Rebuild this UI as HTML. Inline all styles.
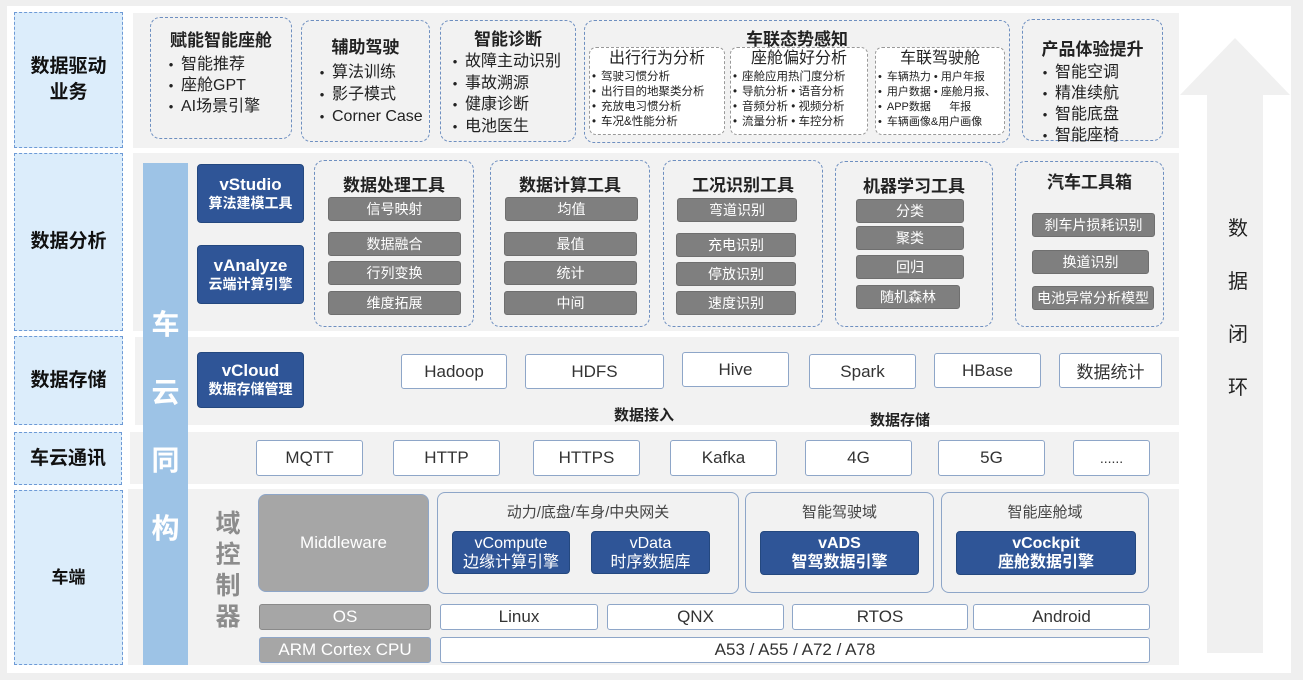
<!DOCTYPE html><html><head><meta charset="utf-8"><style>
*{margin:0;padding:0;box-sizing:border-box}
body{width:1303px;height:680px;background:#efefef;position:relative;overflow:hidden;font-family:"Liberation Sans","Noto Sans CJK SC",sans-serif;color:#222}
.a{position:absolute}
.panel{left:7px;top:6px;width:1284px;height:667px;background:#fff}
.lab{border:1.5px dashed #6d9ad6;background:#dcedfb;display:flex;align-items:center;justify-content:center;font-weight:700;font-size:19px;text-align:center;line-height:26px;color:#111}
.band{background:#f2f2f2}
.db{border:1.2px dashed #6e8fc0;border-radius:10px}
.t{font-weight:700;font-size:17px;text-align:center}
ul.l{list-style:none;font-size:16px;line-height:21px}
ul.l li:before{content:"•";display:inline-block;width:20px;text-align:center;font-size:13px}
.dk{background:#2f5597;color:#fff;border-radius:4px;text-align:center;font-weight:700;display:flex;flex-direction:column;justify-content:center;font-size:16px;line-height:19px;border:1px solid #24487f}
.g{background:#7f7f7f;color:#fff;border-radius:3px;text-align:center;font-size:14px;height:24px;line-height:23px;border:1px solid #6f6f6f}
.w{background:#fff;border:1.5px solid #8ea6c8;border-radius:3px;text-align:center;font-size:17px;color:#333;display:flex;align-items:center;justify-content:center}
.in{background:#fff;border:1px dashed #999;border-radius:7px}
.in ul{list-style:none;font-size:11.5px;line-height:15px;padding-left:2px}
.in li:before{content:"•";margin-right:5px}
.sol{border:1.2px solid #8ea6c8;border-radius:8px}
</style></head><body>
<div class="a panel"></div>
<div class="a lab" style="left:14px;top:12px;width:109px;height:136px">数据驱动<br>业务</div>
<div class="a lab" style="left:14px;top:153px;width:109px;height:178px">数据分析</div>
<div class="a lab" style="left:14px;top:336px;width:109px;height:89px">数据存储</div>
<div class="a lab" style="left:14px;top:432px;width:108px;height:53px">车云通讯</div>
<div class="a lab" style="left:14px;top:490px;width:109px;height:175px;font-size:17px">车端</div>
<div class="a band" style="left:133px;top:13px;width:1046px;height:135px"></div>
<div class="a band" style="left:133px;top:153px;width:1046px;height:178px"></div>
<div class="a band" style="left:135px;top:337px;width:1044px;height:88px"></div>
<div class="a band" style="left:130px;top:432px;width:1049px;height:52px"></div>
<div class="a band" style="left:128px;top:489px;width:1051px;height:176px"></div>
<svg class="a" style="left:1180px;top:38px" width="112" height="616"><polygon points="55,0 110,57 83,57 83,615 27,615 27,57 0,57" fill="#f0f0f0"/></svg>
<div class="a" style="left:1226px;top:203px;font-size:20px;line-height:53px;width:24px;text-align:center">数<br>据<br>闭<br>环</div>
<div class="a" style="left:143px;top:163px;width:45px;height:502px;background:#9dc3e6;color:#fff;font-size:28px;font-weight:700;text-align:center;padding-top:128px;line-height:68px">车<br>云<br>同<br>构</div>
<div class="a db" style="left:150px;top:17px;width:142px;height:122px"><div class="t" style="margin-top:8px">赋能智能座舱</div><ul class="l" style="margin:3px 0 0 10px"><li>智能推荐</li><li>座舱GPT</li><li>AI场景引擎</li></ul></div>
<div class="a db" style="left:301px;top:20px;width:129px;height:122px"><div class="t" style="margin-top:12px">辅助驾驶</div><ul class="l" style="margin:4px 0 0 10px;line-height:22px"><li>算法训练</li><li>影子模式</li><li>Corner Case</li></ul></div>
<div class="a db" style="left:440px;top:20px;width:136px;height:122px"><div class="t" style="margin-top:4px">智能诊断</div><ul class="l" style="margin:1px 0 0 4px;line-height:21.5px"><li>故障主动识别</li><li>事故溯源</li><li>健康诊断</li><li>电池医生</li></ul></div>
<div class="a db" style="left:584px;top:20px;width:426px;height:123px"><div class="t" style="margin-top:4px">车联态势感知</div></div>
<div class="a in" style="left:589px;top:47px;width:136px;height:88px"><div style="text-align:center;font-size:16px;line-height:22px">出行行为分析</div><ul><li>驾驶习惯分析</li><li>出行目的地聚类分析</li><li>充放电习惯分析</li><li>车况&amp;性能分析</li></ul></div>
<div class="a in" style="left:730px;top:47px;width:138px;height:88px"><div style="text-align:center;font-size:16px;line-height:22px">座舱偏好分析</div><ul><li>座舱应用热门度分析</li><li>导航分析 • 语音分析</li><li>音频分析 • 视频分析</li><li>流量分析 • 车控分析</li></ul></div>
<div class="a in" style="left:875px;top:47px;width:130px;height:88px"><div style="text-align:center;font-size:16px;line-height:22px">车联驾驶舱</div><ul style="font-size:11px"><li>车辆热力 • 用户年报</li><li>用户数据 • 座舱月报、</li><li>APP数据 &nbsp;&nbsp;&nbsp;&nbsp;&nbsp;年报</li><li>车辆画像&amp;用户画像</li></ul></div>
<div class="a db" style="left:1022px;top:19px;width:141px;height:122px"><div class="t" style="margin-top:15px">产品体验提升</div><ul class="l" style="margin:2px 0 0 12px"><li>智能空调</li><li>精准续航</li><li>智能底盘</li><li>智能座椅</li></ul></div>
<div class="a dk" style="left:197px;top:164px;width:107px;height:59px"><span style="font-size:17px">vStudio</span><span style="font-size:14px">算法建模工具</span></div>
<div class="a dk" style="left:197px;top:245px;width:107px;height:59px"><span style="font-size:17px">vAnalyze</span><span style="font-size:14px">云端计算引擎</span></div>
<div class="a db" style="left:314px;top:160px;width:160px;height:167px"><div class="t" style="margin-top:10px">数据处理工具</div></div>
<div class="a g" style="left:328px;top:197px;width:133px">信号映射</div><div class="a g" style="left:328px;top:232px;width:133px">数据融合</div><div class="a g" style="left:328px;top:261px;width:133px">行列变换</div><div class="a g" style="left:328px;top:291px;width:133px">维度拓展</div>
<div class="a db" style="left:490px;top:160px;width:160px;height:167px"><div class="t" style="margin-top:10px">数据计算工具</div></div>
<div class="a g" style="left:505px;top:197px;width:133px">均值</div><div class="a g" style="left:504px;top:232px;width:133px">最值</div><div class="a g" style="left:504px;top:261px;width:133px">统计</div><div class="a g" style="left:504px;top:291px;width:133px">中间</div>
<div class="a db" style="left:663px;top:160px;width:160px;height:167px"><div class="t" style="margin-top:10px">工况识别工具</div></div>
<div class="a g" style="left:677px;top:198px;width:120px">弯道识别</div><div class="a g" style="left:676px;top:233px;width:120px">充电识别</div><div class="a g" style="left:676px;top:262px;width:120px">停放识别</div><div class="a g" style="left:676px;top:291px;width:120px">速度识别</div>
<div class="a db" style="left:835px;top:161px;width:158px;height:166px"><div class="t" style="margin-top:10px">机器学习工具</div></div>
<div class="a g" style="left:856px;top:199px;width:108px">分类</div><div class="a g" style="left:856px;top:226px;width:108px">聚类</div><div class="a g" style="left:856px;top:255px;width:108px">回归</div><div class="a g" style="left:856px;top:285px;width:104px">随机森林</div>
<div class="a db" style="left:1015px;top:161px;width:149px;height:166px"><div class="t" style="margin-top:6px">汽车工具箱</div></div>
<div class="a g" style="left:1032px;top:213px;width:123px">刹车片损耗识别</div><div class="a g" style="left:1032px;top:250px;width:117px">换道识别</div><div class="a g" style="left:1032px;top:286px;width:122px">电池异常分析模型</div>
<div class="a dk" style="left:197px;top:352px;width:107px;height:56px"><span style="font-size:17px">vCloud</span><span style="font-size:14px">数据存储管理</span></div>
<div class="a w" style="left:401px;top:354px;width:106px;height:35px">Hadoop</div>
<div class="a w" style="left:525px;top:354px;width:139px;height:35px">HDFS</div>
<div class="a w" style="left:682px;top:352px;width:107px;height:35px">Hive</div>
<div class="a w" style="left:809px;top:354px;width:107px;height:35px">Spark</div>
<div class="a w" style="left:934px;top:353px;width:107px;height:35px">HBase</div>
<div class="a w" style="left:1059px;top:353px;width:103px;height:35px">数据统计</div>
<div class="a" style="left:614px;top:404px;font-weight:700;font-size:15px">数据接入</div>
<div class="a" style="left:870px;top:409px;font-weight:700;font-size:15px">数据存储</div>
<div class="a w" style="left:256px;top:440px;width:107px;height:36px">MQTT</div>
<div class="a w" style="left:393px;top:440px;width:107px;height:36px">HTTP</div>
<div class="a w" style="left:533px;top:440px;width:107px;height:36px">HTTPS</div>
<div class="a w" style="left:670px;top:440px;width:107px;height:36px">Kafka</div>
<div class="a w" style="left:805px;top:440px;width:107px;height:36px">4G</div>
<div class="a w" style="left:938px;top:440px;width:107px;height:36px">5G</div>
<div class="a w" style="left:1073px;top:440px;width:77px;height:36px;font-size:14px">......</div>
<div class="a" style="left:213px;top:509px;width:30px;font-size:25px;font-weight:700;color:#8c8c8c;line-height:31px;text-align:center">域<br>控<br>制<br>器</div>
<div class="a" style="left:258px;top:494px;width:171px;height:98px;background:#a6a6a6;border:1.2px solid #8ea6c8;border-radius:8px;color:#fff;font-size:17px;display:flex;align-items:center;justify-content:center">Middleware</div>
<div class="a sol" style="left:437px;top:492px;width:302px;height:102px"><div style="text-align:center;font-size:15px;color:#444;margin-top:8px">动力/底盘/车身/中央网关</div></div>
<div class="a dk" style="left:452px;top:531px;width:118px;height:43px;font-weight:400;font-size:16px"><span>vCompute</span><span>边缘计算引擎</span></div>
<div class="a dk" style="left:591px;top:531px;width:119px;height:43px;font-weight:400;font-size:16px"><span>vData</span><span>时序数据库</span></div>
<div class="a sol" style="left:745px;top:492px;width:189px;height:101px"><div style="text-align:center;font-size:15px;color:#444;margin-top:8px">智能驾驶域</div></div>
<div class="a dk" style="left:760px;top:531px;width:159px;height:44px;font-size:16px"><span>vADS</span><span>智驾数据引擎</span></div>
<div class="a sol" style="left:941px;top:492px;width:208px;height:101px"><div style="text-align:center;font-size:15px;color:#444;margin-top:8px">智能座舱域</div></div>
<div class="a dk" style="left:956px;top:531px;width:180px;height:44px;font-size:16px"><span>vCockpit</span><span>座舱数据引擎</span></div>
<div class="a w" style="left:259px;top:604px;width:172px;height:26px;background:#a6a6a6;color:#fff;border-color:#8a8a8a">OS</div>
<div class="a w" style="left:440px;top:604px;width:158px;height:26px">Linux</div>
<div class="a w" style="left:607px;top:604px;width:177px;height:26px">QNX</div>
<div class="a w" style="left:792px;top:604px;width:176px;height:26px">RTOS</div>
<div class="a w" style="left:973px;top:604px;width:177px;height:26px">Android</div>
<div class="a w" style="left:259px;top:637px;width:172px;height:26px;background:#a6a6a6;color:#fff;border-color:#8ea6c8">ARM Cortex CPU</div>
<div class="a w" style="left:440px;top:637px;width:710px;height:26px">A53 / A55 / A72 / A78</div>
</body></html>
